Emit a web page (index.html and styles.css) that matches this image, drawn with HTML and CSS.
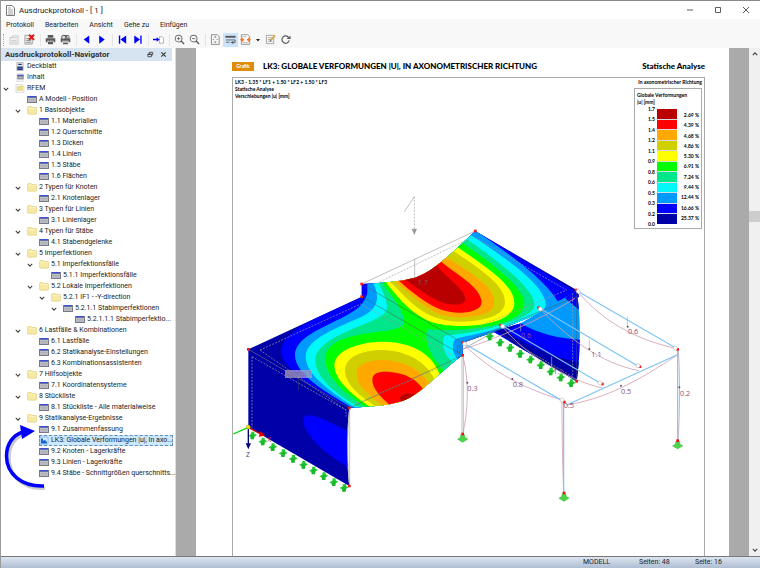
FILE: index.html
```html
<!DOCTYPE html>
<html lang="de">
<head>
<meta charset="utf-8">
<title>Ausdruckprotokoll</title>
<link rel="stylesheet" href="styles.css">
</head>
<body>
<svg class="defs" aria-hidden="true">
  <symbol id="grid" viewBox="0 0 10 7"><path fill="#777b86" d="M0 0h10v7H0z"/><path fill="#c6c8cc" d="M1 2h8v4H1z"/><path fill="#3c50d8" d="M1 0h8v1H1z"/><path fill="#5568c8" opacity=".5" d="M1 1h8v1H1z"/><path stroke="#9a9ca2" stroke-width=".4" d="M1 3.5h8M1 5h8M3 2v4M5 2v4M7 2v4"/></symbol>
  <symbol id="folder" viewBox="0 0 10 9"><path fill="#f6e9a4" stroke="#dccb78" stroke-width=".6" d="M.6 1.5q0-1 1-1h2.6l.8 1H9q.6 0 .6.7v5q0 1-1 1h-7q-1 0-1-1z"/><path stroke="#fff6cc" stroke-width=".6" d="M1.5 2.6h7.3"/></symbol>
  <symbol id="cover" viewBox="0 0 10 10"><path fill="#eee" stroke="#888" stroke-width=".6" d="M1.5.5h7v9h-7z"/><path fill="#203878" d="M2 5h6v4H2zM3 2h4v1.4H3z"/><path stroke="#7090d0" stroke-width=".7" d="M3 7h4"/></symbol>
  <symbol id="toc" viewBox="0 0 10 10"><path fill="#f2f2f2" stroke="#ccc" stroke-width=".5" d="M1.5.5h7v9h-7z"/><path fill="#777b88" d="M2 2h7v5H2z"/><path fill="#3c50d8" d="M2 2h7v1H2z"/><path fill="#bbb" d="M3 4h5v2H3z"/></symbol>
  <symbol id="root" viewBox="0 0 10 10"><path fill="#f7f7f7" stroke="#bbb" stroke-width=".5" d="M.5.5h7l2 2v7h-9z"/><path fill="#f0df80" stroke="#d5c260" stroke-width=".4" d="M2 3h2l1-.8h3v5H2z"/></symbol>
  <symbol id="chart" viewBox="0 0 10 8"><path fill="#d8ecff" stroke="#6aa3e0" stroke-width=".6" d="M1 .5h8v7H1z"/><path fill="#1766d0" d="M2 7V2h2v2h1l1-1 1 2h1v2z"/></symbol>
  <symbol id="chev" viewBox="0 0 6 6"><path fill="none" stroke="#444" stroke-width="1.1" d="M.8 1.8 3 4.1l2.2-2.3"/></symbol>
  <symbol id="sheet" viewBox="0 0 12 12"><path fill="#fafafa" stroke="#8b8b8b" stroke-width=".8" d="M1.5 1.5h8v9h-8z"/><path stroke="#999" stroke-width=".8" d="M3 4h5M3 6h5M3 8h5"/></symbol>
  <symbol id="printer" viewBox="0 0 12 12"><path fill="#5a5a5a" d="M3 1h6v3H3zM.8 4.6h10.4V9H9.4V7.4H2.6V9H.8zM3.2 8.2h5.6v2.9H3.2z"/></symbol>
  <symbol id="lens" viewBox="0 0 12 12"><circle cx="5" cy="5" r="3.7" fill="none" stroke="#707070" stroke-width="1.1"/><path stroke="#606060" stroke-width="1.6" d="m7.7 7.7 3.3 3.3"/><path stroke="#707070" d="M3.2 5h3.6"/></symbol>
</svg>

<header class="titlebar">
  <svg class="appicon" viewBox="0 0 9 11"><path fill="#fff" stroke="#777" d="M.5.5h5.5l2.5 2.500v7.500h-8z"/><path stroke="#888" stroke-width=".8" d="M2 3h3M2 5h5M2 7h5M2 9h5"/></svg>
  <h1>Ausdruckprotokoll - [ 1 ]</h1>
  <div class="winbtns">
    <button aria-label="Minimieren"><svg viewBox="0 0 8 8"><path stroke="#333" stroke-width=".8" d="M1 4h6"/></svg></button>
    <button aria-label="Maximieren"><svg viewBox="0 0 8 8"><path fill="none" stroke="#333" stroke-width=".8" d="M1.500 1.500h5v5h-5z"/></svg></button>
    <button aria-label="Schließen"><svg viewBox="0 0 8 8"><path stroke="#333" stroke-width=".8" d="m1 1 6 6m0-6-6 6"/></svg></button>
  </div>
</header>

<nav class="menubar">
  <button>Protokoll</button><button>Bearbeiten</button><button>Ansicht</button><button>Gehe zu</button><button>Einfügen</button>
</nav>

<div class="toolbar" role="toolbar">
  <span class="grip"></span>
  <button aria-label="Neu"><svg viewBox="0 0 12 12"><path fill="#f5f5f5" stroke="#bbb" stroke-width=".8" d="M1 4h7l2 2v5H1z"/><path fill="none" stroke="#bbb" stroke-width=".8" d="M3 4l1-2h6v3M2.500 7h6M2.500 9h6"/></svg></button>
  <button aria-label="Löschen"><svg viewBox="0 0 12 12"><path fill="#eee" stroke="#888" stroke-width=".8" d="M1 1.500h8v9.500h-8z"/><path stroke="#888" d="M2.500 5h4M2.500 7h5M2.500 9h5"/><path stroke="#e81010" stroke-width="2" d="m5.500.8 5.500 5.500m0-5.500L5.500 6.300"/></svg></button>
  <i></i>
  <button aria-label="Drucken"><svg viewBox="0 0 12 12"><use href="#printer"/></svg></button>
  <button aria-label="Druckeinstellungen"><svg viewBox="0 0 12 12"><use href="#printer"/><circle cx="4" cy="3.500" r="2.200" fill="#ddd" stroke="#555"/><circle cx="8.500" cy="3" r="1.500" fill="#ddd" stroke="#666"/><path stroke="#fff" stroke-width=".8" d="M3 9h6"/></svg></button>
  <i></i>
  <button aria-label="Zurück"><svg viewBox="0 0 12 12"><path fill="#00f" d="M9 1.500v9L3 6z"/></svg></button>
  <button aria-label="Vor"><svg viewBox="0 0 12 12"><path fill="#00f" d="M3.500 1.500v9l6-4.500z"/></svg></button>
  <i></i>
  <button aria-label="Anfang"><svg viewBox="0 0 12 12"><path fill="#00f" d="M2 1.500h1.500v9H2zM10 1.500v9L3.800 6z"/></svg></button>
  <button aria-label="Ende"><svg viewBox="0 0 12 12"><path fill="#00f" d="M9 1.500h1.500v9H9zM2.500 1.500v9L8.700 6z"/></svg></button>
  <i></i>
  <button aria-label="Gehe zu Seite"><svg viewBox="0 0 12 12"><path fill="#fff" stroke="#999" stroke-width=".8" d="M7 3h3l1.500 1.500V10H7z"/><path fill="#00f" d="M0 5.200h4V3.500L7.200 6 4 8.500V6.800H0z"/></svg></button>
  <i></i>
  <button aria-label="Vergrößern"><svg viewBox="0 0 12 12"><use href="#lens"/><path stroke="#707070" d="M5 3.200v3.600"/></svg></button>
  <button aria-label="Verkleinern"><svg viewBox="0 0 12 12"><use href="#lens"/></svg></button>
  <i></i>
  <button aria-label="Ganze Seite"><svg viewBox="0 0 12 12"><path fill="#fafafa" stroke="#777" stroke-width=".9" d="M1.500.8h6.500l2 2v8.500h-8.500z"/><path fill="none" stroke="#888" stroke-width=".9" d="M5.700 2.500v2m0 3v2M3 6h1.500m2.500 0h1.500M4.500 3.700l1.200-1.200 1.200 1.200M4.500 8.300l1.200 1.200 1.200-1.200"/></svg></button>
  <button class="on" aria-label="Navigator" aria-pressed="true"><svg viewBox="0 0 12 12"><path fill="#555" d="M.5 2h11v2H.5z"/><path fill="none" stroke="#666" d="M1 6.500h10M1 9h4"/><path fill="#555" d="m9 7.500-3 1.700 3 1.700z"/><path fill="none" stroke="#555" d="M8.500 9.200h2.500V6.500"/></svg></button>
  <button aria-label="Seitenbreite"><svg viewBox="0 0 12 12"><path fill="#fafafa" stroke="#888" stroke-width=".9" d="M1.500.8h7l2 2v8.500h-9z"/><path fill="#f07820" d="M0 6.200 3 3.500V9zM12 6.200 9 3.500V9zM3 5.500h1.500V7H3zM7.500 5.500H9V7H7.500z"/><path stroke="#888" stroke-width=".6" d="M3 3h4M3 9.500h6"/></svg></button>
  <button class="drop" aria-label="Weitere"><svg viewBox="0 0 12 12"><path fill="#222" d="M2 4h8L6 9z"/></svg></button>
  <button aria-label="Bearbeiten"><svg viewBox="0 0 12 12"><use href="#sheet"/><path stroke="#d8a83c" stroke-width="1.800" d="m6 7 5-5.500"/><path fill="#555" d="m5 8.300.5-2 1.400 1.300z"/></svg></button>
  <button aria-label="Aktualisieren"><svg viewBox="0 0 12 12"><path fill="none" stroke="#5c5c5c" stroke-width="1.300" d="M9.500 4A4 4 0 1 0 10 7"/><path fill="#5c5c5c" d="M7 5.500h4.500V1.800z"/></svg></button>
</div>

<main class="work">
  <aside class="navigator">
    <div class="navhead"><h2>Ausdruckprotokoll-Navigator</h2>
      <button aria-label="Abdocken"><svg viewBox="0 0 8 8"><path fill="none" stroke="#333" stroke-width=".9" d="M1 3.500h4v3H1zM2.500 3.500v-2h4v3H5M1 4h4"/></svg></button>
      <button aria-label="Schließen"><svg viewBox="0 0 8 8"><path stroke="#333" stroke-width="1.200" d="m1.500 1.500 5 5m0-5-5 5"/></svg></button>
    </div>
    <ul class="tree">
      <li class="l0"><svg class="ic"><use href="#cover"/></svg><span>Deckblatt</span></li>
      <li class="l0"><svg class="ic"><use href="#toc"/></svg><span>Inhalt</span></li>
      <li class="l0"><svg class="ch"><use href="#chev"/></svg><svg class="ic"><use href="#root"/></svg><span>RFEM</span></li>
      <li class="l1"><svg class="ic"><use href="#grid"/></svg><span>A Modell - Position</span></li>
      <li class="l1"><svg class="ch"><use href="#chev"/></svg><svg class="ic"><use href="#folder"/></svg><span>1 Basisobjekte</span></li>
      <li class="l2"><svg class="ic"><use href="#grid"/></svg><span>1.1 Materialien</span></li>
      <li class="l2"><svg class="ic"><use href="#grid"/></svg><span>1.2 Querschnitte</span></li>
      <li class="l2"><svg class="ic"><use href="#grid"/></svg><span>1.3 Dicken</span></li>
      <li class="l2"><svg class="ic"><use href="#grid"/></svg><span>1.4 Linien</span></li>
      <li class="l2"><svg class="ic"><use href="#grid"/></svg><span>1.5 Stäbe</span></li>
      <li class="l2"><svg class="ic"><use href="#grid"/></svg><span>1.6 Flächen</span></li>
      <li class="l1"><svg class="ch"><use href="#chev"/></svg><svg class="ic"><use href="#folder"/></svg><span>2 Typen für Knoten</span></li>
      <li class="l2"><svg class="ic"><use href="#grid"/></svg><span>2.1 Knotenlager</span></li>
      <li class="l1"><svg class="ch"><use href="#chev"/></svg><svg class="ic"><use href="#folder"/></svg><span>3 Typen für Linien</span></li>
      <li class="l2"><svg class="ic"><use href="#grid"/></svg><span>3.1 Linienlager</span></li>
      <li class="l1"><svg class="ch"><use href="#chev"/></svg><svg class="ic"><use href="#folder"/></svg><span>4 Typen für Stäbe</span></li>
      <li class="l2"><svg class="ic"><use href="#grid"/></svg><span>4.1 Stabendgelenke</span></li>
      <li class="l1"><svg class="ch"><use href="#chev"/></svg><svg class="ic"><use href="#folder"/></svg><span>5 Imperfektionen</span></li>
      <li class="l2"><svg class="ch"><use href="#chev"/></svg><svg class="ic"><use href="#folder"/></svg><span>5.1 Imperfektionsfälle</span></li>
      <li class="l3"><svg class="ic"><use href="#grid"/></svg><span>5.1.1 Imperfektionsfälle</span></li>
      <li class="l2"><svg class="ch"><use href="#chev"/></svg><svg class="ic"><use href="#folder"/></svg><span>5.2 Lokale Imperfektionen</span></li>
      <li class="l3"><svg class="ch"><use href="#chev"/></svg><svg class="ic"><use href="#folder"/></svg><span>5.2.1 IF1 - -Y-direction</span></li>
      <li class="l4"><svg class="ch"><use href="#chev"/></svg><svg class="ic"><use href="#grid"/></svg><span>5.2.1.1 Stabimperfektionen</span></li>
      <li class="l5"><svg class="ic"><use href="#grid"/></svg><span>5.2.1.1.1 Stabimperfektio...</span></li>
      <li class="l1"><svg class="ch"><use href="#chev"/></svg><svg class="ic"><use href="#folder"/></svg><span>6 Lastfälle &amp; Kombinationen</span></li>
      <li class="l2"><svg class="ic"><use href="#grid"/></svg><span>6.1 Lastfälle</span></li>
      <li class="l2"><svg class="ic"><use href="#grid"/></svg><span>6.2 Statikanalyse-Einstellungen</span></li>
      <li class="l2"><svg class="ic"><use href="#grid"/></svg><span>6.3 Kombinationsassistenten</span></li>
      <li class="l1"><svg class="ch"><use href="#chev"/></svg><svg class="ic"><use href="#folder"/></svg><span>7 Hilfsobjekte</span></li>
      <li class="l2"><svg class="ic"><use href="#grid"/></svg><span>7.1 Koordinatensysteme</span></li>
      <li class="l1"><svg class="ch"><use href="#chev"/></svg><svg class="ic"><use href="#folder"/></svg><span>8 Stückliste</span></li>
      <li class="l2"><svg class="ic"><use href="#grid"/></svg><span>8.1 Stückliste - Alle materialweise</span></li>
      <li class="l1"><svg class="ch"><use href="#chev"/></svg><svg class="ic"><use href="#folder"/></svg><span>9 Statikanalyse-Ergebnisse</span></li>
      <li class="l2"><svg class="ic"><use href="#grid"/></svg><span>9.1 Zusammenfassung</span></li>
      <li class="l2 sel"><div><svg class="ic"><use href="#chart"/></svg><span>LK3: Globale Verformungen |u|, In axo...</span></div></li>
      <li class="l2"><svg class="ic"><use href="#grid"/></svg><span>9.2 Knoten - Lagerkräfte</span></li>
      <li class="l2"><svg class="ic"><use href="#grid"/></svg><span>9.3 Linien - Lagerkräfte</span></li>
      <li class="l2"><svg class="ic"><use href="#grid"/></svg><span>9.4 Stäbe - Schnittgrößen querschnitts...</span></li>
    </ul>
    <svg class="callout" viewBox="0 0 50 70" aria-hidden="true">
      <path fill="none" stroke="#999" stroke-opacity=".5" stroke-width="3.500" d="M44 64C22 66 8 52 8 34 8 22 14 13 23 10"/>
      <path fill="none" stroke="#00f" stroke-width="3.500" d="M43 62C21 63 5.500 50 5.500 32 5.500 20 12 11 22 8"/>
      <path fill="#00f" d="m19 1 15 6-13 8z"/>
    </svg>
  </aside>

  <section class="viewer">
    <article class="page">
      <div class="pagehead"><span class="badge">Grafik</span><h3>LK3: GLOBALE VERFORMUNGEN |U|, IN AXONOMETRISCHER RICHTUNG</h3><strong>Statische Analyse</strong></div>
      <div class="frame">
        <svg class="model" viewBox="-21 -306 1413 1434" role="img" aria-label="Globale Verformungen">
          <defs>
            <clipPath id="roof"><path d="M25 508 365 350V312C440 307 480 305 525 293C570 278 605 245 645 210L706 153 1011 331 1018 350 765 455 720 470 668 488V526C600 575 550 635 500 658C460 675 420 678 328 684Z"/></clipPath>
            <clipPath id="wall"><path d="M760 455 842 430 1009 333C1022 390 1024 500 1010 604Z"/></clipPath>
            <g id="sup"><path fill="#22cc33" d="M-4-10H5V-4L13 0 5 5 4 13H-6L-7 6-14 2-5-3Z"/><path fill="#119922" opacity=".4" d="M-5 0 5-3 4 13H-6z"/></g>
            <g id="base"><path fill="#4fd14f" d="M-6-12H6L8-3 17 2 0 13-17 3-8-3z"/><path fill="#f01010" d="M-4-17h8v8h-8z"/></g>
            <path id="n" fill="#f01818" d="M-4-4h8v8h-8z"/>
            <circle id="h" r="6" fill="#fff" stroke="#bbb" stroke-width="2"/>
          </defs>
          <g clip-path="url(#roof)">
            <path fill="#0000a8" d="M0 100h1100v600H0z"/>
            <path fill="#00f" d="M365 290V352L285 388C210 422 125 460 124 515C124 570 250 640 328 690H1100V400L1012 340C930 285 800 212 706 153V100Z"/>
            <path fill="#009aff" d="M382 300V335Q382 348 370 365C340 420 165 450 165 525C165 590 270 640 345 690H1100V480L1020 400 975 355 953 364C930 320 850 250 712 155V100Z"/>
            <path fill="#00f8f8" d="M395 300C420 345 420 385 365 410C300 440 197 475 197 530C197 590 290 645 355 690H650L655 540C635 520 635 490 645 478C680 465 735 460 800 438C880 415 920 395 917 370C910 320 830 255 692 165L660 100Z"/>
            <path fill="#00e68a" d="M411 300C430 340 445 365 440 390C430 430 230 460 226 540C226 600 300 650 372 690H640V548C605 520 605 480 615 466C680 462 740 450 800 430C860 408 885 395 883 370C880 330 800 260 680 178L640 100Z"/>
            <path fill="#0f0" d="M423 300C440 335 495 385 492 430C485 470 262 440 256 535C256 600 330 650 388 690H613V572C570 530 550 480 562 447C640 455 700 446 750 438C820 425 853 400 853 370C853 330 780 265 668 190L620 100Z"/>
            <path fill="#ff0" d="M431 300C470 345 500 390 560 420C600 438 660 442 720 434C790 424 823 400 823 370C823 320 760 275 655 203L600 100ZM405 690C340 650 283 600 283 555C285 510 360 485 430 485C530 487 580 530 600 585V690Z"/>
            <path fill="#d0d000" d="M445 300C500 355 530 390 580 410C620 426 660 428 705 422C765 414 795 395 795 365C795 320 735 275 640 213L590 100ZM425 690C360 650 315 615 315 570C315 530 370 510 425 510C510 512 560 550 585 600V690Z"/>
            <path fill="#ffa800" d="M460 300C520 350 550 380 590 398C620 411 660 416 700 409C745 402 762 390 762 365C762 320 700 285 620 232L590 100ZM448 690C390 650 350 620 350 580C350 550 390 540 430 540C500 542 545 575 570 612V690Z"/>
            <path fill="#f00" d="M474 300C520 340 550 365 600 388C635 401 670 401 700 392C720 386 727 375 724 360C715 315 650 285 604 245L560 200ZM455 680C420 650 397 625 397 600C397 575 425 573 450 576C500 580 530 600 550 628V690Z"/>
            <path fill="#b80000" d="M497 300C540 330 560 345 590 360C615 372 640 378 665 371C678 366 679 354 670 340C650 310 610 285 585 250L540 250ZM480 656C480 642 500 638 526 643V670H485Z"/>
          </g>
          <g clip-path="url(#wall)">
            <path fill="#009aff" d="M750 300h300v320H750z"/>
            <path fill="#00f" d="M1005 325 1030 400 975 355ZM842 430C900 465 960 475 1030 480V620H750V440Z"/>
            <path fill="#0000a8" d="M750 440 833 432 800 455C850 490 930 530 1030 550V640ZM1004 325l10 0 3 30-10-10z"/>
          </g>
          <path fill="#0000a8" d="M25 508 328 684C320 730 320 870 328 918L25 742Z"/>
          <path fill="#00f" d="M322 752C290 740 240 706 205 706C184 708 187 728 200 752C222 790 270 830 323 860Z"/>
          <path fill="#fff" stroke="#aaa" stroke-width="2" d="M329 686V918C322 860 320 770 329 686Z"/>
          <g fill="none" stroke="#a0a0a0" stroke-width="2">
            <path d="M365 312 706 153M524 237v55"/>
            <path stroke-dasharray="6 4" d="M410 310 700 170 980 330 690 450M60 510 362 372 640 528M60 510 318 690V710M36 530V745M36 530 318 690M345 672 640 545M998 340V590L860 510M523 50V145"/>
            <path d="m493 95 30-45"/>
            <path fill="#999" stroke="none" d="M515 146h16l-8 19z"/>
          </g>
          <g fill="none" stroke="#555" stroke-opacity=".55" stroke-width="2.500">
            <path d="M365 312 668 488M365 350 668 526M25 508 328 684 668 526M668 488 1010 350M668 508 790 440M1010 331V604L790 465M175 580v50"/>
            <path d="M653 497h8v20h-8z"/>
          </g>
          <path fill="none" stroke="#bbb" stroke-width="7" d="M668 530V760"/>
          <path fill="none" stroke="#fff" stroke-width="2" d="M668 530V760"/>
          <g fill="none" stroke="#cfa0b4" stroke-width="2.500">
            <path d="M1012 334C1070 400 1150 470 1310 506M902 388C980 470 1080 550 1197 572M788 440C850 520 980 600 1088 624M672 494C740 560 830 620 970 661M980 675C1100 655 1190 605 1312 525M1315 510C1320 580 1320 700 1314 780M966 665C966 760 968 870 971 935M669 530C690 610 682 700 669 760M668 508C760 480 900 420 1005 355"/>
            <path stroke="#aaa" stroke-width="2" d="M1162 410v30M1048 478v28M842 432v22M935 530v45"/>
          </g>
          <g fill="none" stroke="#7cc4f4" stroke-width="3.500">
            <path d="M1012 333 1313 507V780M902 386 1197 560M788 438 1085 612M670 489 971 665V938M980 675 1312 524"/>
          </g>
          <path fill="#a89cc8" fill-opacity=".75" d="M135 570h81v24h-81z"/>
          <g class="labels">
            <text class="faint" x="138" y="588">usgepl.1</text>
            <text x="533" y="314">1.7</text><text x="843" y="474">0.6</text><text x="1164" y="463">0.6</text><text x="1054" y="530">1.1</text>
            <text x="940" y="582">1.1</text><text x="1143" y="641">0.5</text><text x="1320" y="647">0.2</text><text x="818" y="620">0.8</text>
            <text x="682" y="632">0.3</text><text x="971" y="683">0.5</text>
          </g>
          <g fill="#704860"><circle cx="1163" cy="440" r="3"/><circle cx="1048" cy="507" r="3"/><circle cx="1143" cy="617" r="3"/><circle cx="1318" cy="622" r="3"/><circle cx="817" cy="597" r="3"/><circle cx="682" cy="608" r="3"/></g>
          <use href="#sup" x="38" y="765"/><use href="#sup" x="69" y="783"/><use href="#sup" x="99" y="800"/><use href="#sup" x="130" y="818"/><use href="#sup" x="160" y="835"/><use href="#sup" x="191" y="853"/><use href="#sup" x="221" y="870"/><use href="#sup" x="252" y="887"/><use href="#sup" x="282" y="905"/><use href="#sup" x="313" y="922"/>
          <use href="#sup" x="750" y="468"/><use href="#sup" x="781" y="486"/><use href="#sup" x="811" y="502"/><use href="#sup" x="841" y="520"/><use href="#sup" x="872" y="537"/><use href="#sup" x="903" y="554"/><use href="#sup" x="933" y="573"/><use href="#sup" x="963" y="591"/><use href="#sup" x="994" y="608"/>
          <use href="#base" x="668" y="775"/><use href="#base" x="972" y="952"/><use href="#base" x="1313" y="795"/>
          <use href="#n" x="25" y="508"/><use href="#n" x="365" y="312"/><use href="#n" x="365" y="350"/><use href="#n" x="706" y="153"/><use href="#n" x="1008" y="330"/><use href="#n" x="1010" y="604"/><use href="#n" x="668" y="488"/><use href="#n" x="668" y="526"/><use href="#n" x="328" y="684"/><use href="#n" x="328" y="918"/><use href="#n" x="896" y="383"/><use href="#n" x="782" y="436"/><use href="#n" x="1200" y="560"/><use href="#n" x="1087" y="612"/><use href="#n" x="1313" y="508"/><use href="#n" x="973" y="666"/>
          <use href="#h" x="1015" y="334"/><use href="#h" x="901" y="387"/><use href="#h" x="788" y="439"/><use href="#h" x="674" y="492"/><use href="#h" x="1194" y="557"/><use href="#h" x="1080" y="609"/><use href="#h" x="1306" y="504"/><use href="#h" x="966" y="660"/>
          <path stroke="#00d800" stroke-width="4" d="M25 742-20 762"/>
          <path stroke="#e00000" stroke-width="4" d="M25 742 62 762"/><path fill="#e00000" d="m62 753 14 14-20 3z"/>
          <path stroke="#000080" stroke-width="4" d="M25 742v52"/><path fill="#000080" d="M17 790h16l-8 18z"/>
          <circle cx="25" cy="741" r="6" fill="#f0e000" stroke="#998800"/>
          <text class="axz" x="18" y="830">Z</text><text class="axx" x="82" y="785">X</text>
        </svg>
        <div class="overlay">
          <p>LK3 - 1.35 * LF1 + 1.50 * LF2 + 1.50 * LF3<br>Statische Analyse<br>Verschiebungen |u| [mm]</p>
          <div class="right">
            <p>In axonometrischer Richtung</p>
            <div class="legend">
              <p>Globale Verformungen<br>|u| [mm]</p>
              <div class="scale">
                <div class="vals"><span>1.7</span><span>1.5</span><span>1.4</span><span>1.2</span><span>1.1</span><span>0.9</span><span>0.8</span><span>0.6</span><span>0.5</span><span>0.3</span><span>0.2</span><span>0.0</span></div>
                <div class="sw"><b class="c1"></b><b class="c2"></b><b class="c3"></b><b class="c4"></b><b class="c5"></b><b class="c6"></b><b class="c7"></b><b class="c8"></b><b class="c9"></b><b class="c10"></b><b class="c11"></b></div>
                <div class="pct"><span>2.69 %</span><span>4.39 %</span><span>4.68 %</span><span>4.86 %</span><span>5.30 %</span><span>6.91 %</span><span>7.24 %</span><span>9.44 %</span><span>12.44 %</span><span>16.66 %</span><span>25.37 %</span></div>
              </div>
            </div>
          </div>
        </div>
      </div>
    </article>
  </section>

  <div class="scrollbar">
    <button aria-label="Nach oben"><svg class="up"><use href="#chev"/></svg></button>
    <span class="before"></span><span class="thumb"></span><span class="after"></span>
    <button aria-label="Nach unten"><svg><use href="#chev"/></svg></button>
  </div>
</main>

<footer class="status"><span>MODELL</span><span>Seiten: 48</span><span>Seite: 16</span></footer>
</body>
</html>
```
FILE: styles.css
```css
* { box-sizing: border-box; }
body {
  margin: 0;
  height: 100vh;
  display: flex;
  flex-direction: column;
  overflow: hidden;
  border-top: 1px solid #8a8a8a;
  border-left: 1px solid #9a9a9a;
  background: #f8f8f8;
  color: #1c1c24;
  font: 7px/11px Roboto, "Liberation Sans", sans-serif;
}
h1, h2, h3, p, ul { margin: 0; padding: 0; font-size: inherit; font-weight: inherit; }
button { border: 0; padding: 0; background: none; font: inherit; color: inherit; display: flex; align-items: center; justify-content: center; }
.defs { position: absolute; width: 0; height: 0; }

.titlebar { display: flex; align-items: center; height: 18px; padding-left: 5px; gap: 4px; background: #fff; }
.titlebar h1 { flex: 1; font-size: 8px; }
.appicon { width: 9px; height: 11px; }
.winbtns { display: flex; }
.winbtns button { width: 28px; height: 16px; }
.winbtns svg { width: 8px; height: 8px; }

.menubar { display: flex; gap: 11px; height: 12px; padding-left: 5px; }

.toolbar { display: flex; align-items: center; height: 17px; padding-left: 2px; }
.toolbar .grip { width: 4px; height: 12px; border-left: 1px dotted #aaa; }
.toolbar button { width: 15px; height: 14px; }
.toolbar svg { width: 11px; height: 11px; }
.toolbar i { width: 6px; height: 12px; background: linear-gradient(#e4e4e4, #e4e4e4) center / 1px 100% no-repeat; }
.toolbar .on { background: #cbe4fa; }
.toolbar .drop { width: 10px; }
.toolbar .drop svg { width: 6px; height: 6px; }

.work { flex: 1; display: flex; min-height: 0; }
.navigator { position: relative; flex: none; width: 175px; padding-right: 3px; background: #fff; border-right: 1px solid #ddd; }
.navhead { display: flex; align-items: center; height: 13px; padding: 0 2px 0 4px; background: #d6e4f2; }
.navhead h2 { flex: 1; font-size: 8px; font-weight: 700; color: #333; }
.navhead button { width: 13px; }
.navhead svg { width: 7px; height: 7px; }

.tree { list-style: none; }
.tree li, .tree div { display: flex; align-items: center; height: 11px; white-space: nowrap; }
.tree .ic { width: 10px; height: 9px; margin-right: 2px; flex: none; }
.tree .ch { width: 6px; height: 6px; margin: 0 6px 0 -12px; flex: none; }
.l0 { padding-left: 14px; }
.l1 { padding-left: 26px; }
.l2 { padding-left: 38px; }
.l3 { padding-left: 50px; }
.l4 { padding-left: 62px; }
.l5 { padding-left: 74px; }
.tree .sel div { flex: 1; background: #cce8ff; outline: 1px dashed #5d8fb8; outline-offset: -1px; }
.callout { position: absolute; left: 0; bottom: 62px; width: 50px; height: 70px; }

.viewer { flex: 1; min-width: 0; overflow: hidden; padding: 0 20px; background: #aaa; }
.page { min-height: 100%; padding: 12px 24px 0 36px; background: #fff; font: 700 5px/7px Lato, sans-serif; color: #000; }
.pagehead { display: flex; align-items: center; height: 17px; padding-bottom: 5px; font-size: 8px; line-height: 10px; }
.pagehead h3 { flex: 1; font-weight: 900; white-space: nowrap; }
.pagehead strong { font-weight: 900; }
.badge { width: 22px; height: 9px; margin-right: 9px; background: #df8d06; color: #fff; font-size: 5px; line-height: 9px; text-align: center; }
.frame { display: grid; border: 1px solid #aaa; border-bottom: 0; }
.model { grid-area: 1 / 1; width: 100%; display: block; }
.overlay { grid-area: 1 / 1; display: flex; justify-content: space-between; align-items: flex-start; padding: 1px 2px; }
.right { text-align: right; }
.legend { width: 68px; margin-top: 2px; margin-left: auto; padding: 3px 2px 1px; border: 1px solid #aaa; background: #fff; text-align: left; }
.scale { display: flex; height: 121px; gap: 2px; }
.vals, .sw, .pct { display: flex; flex-direction: column; justify-content: space-between; line-height: 6px; }
.vals { flex: 1; text-align: right; }
.sw { width: 20px; margin: 3px 0; gap: 1px; background: #d8d8e0; }
.sw b { flex: 1; }
.pct { width: 20px; padding: 6px 0; text-align: right; white-space: nowrap; }
.c1 { background: #b80000; } .c2 { background: #f00; } .c3 { background: #ffa800; } .c4 { background: #d0d000; }
.c5 { background: #ff0; } .c6 { background: #0f0; } .c7 { background: #00e68a; } .c8 { background: #00f8f8; }
.c9 { background: #009aff; } .c10 { background: #00f; } .c11 { background: #0000a8; }
.labels text { font: 400 22px "Open Sans", sans-serif; fill: #8c5074; }
.labels .faint { font-size: 20px; fill: #77739a; }
.axz { font: 400 20px "Open Sans", sans-serif; fill: #334488; }
.axx { font: 400 20px "Open Sans", sans-serif; fill: #d01030; }

.scrollbar { width: 11px; display: flex; flex-direction: column; align-items: stretch; background: #f0f0f0; }
.scrollbar button { height: 12px; }
.scrollbar svg { width: 6px; height: 6px; }
.scrollbar .up { transform: rotate(180deg); }
.before { flex: 151; }
.thumb { flex: 11; background: #cdcdcd; }
.after { flex: 322; }

.status { display: grid; grid-template-columns: 56px 56px 1fr; height: 12px; padding-left: 582px; border-top: 1px solid #777; background: linear-gradient(#dde5ef, #aebdd2); line-height: 11px; }
```
